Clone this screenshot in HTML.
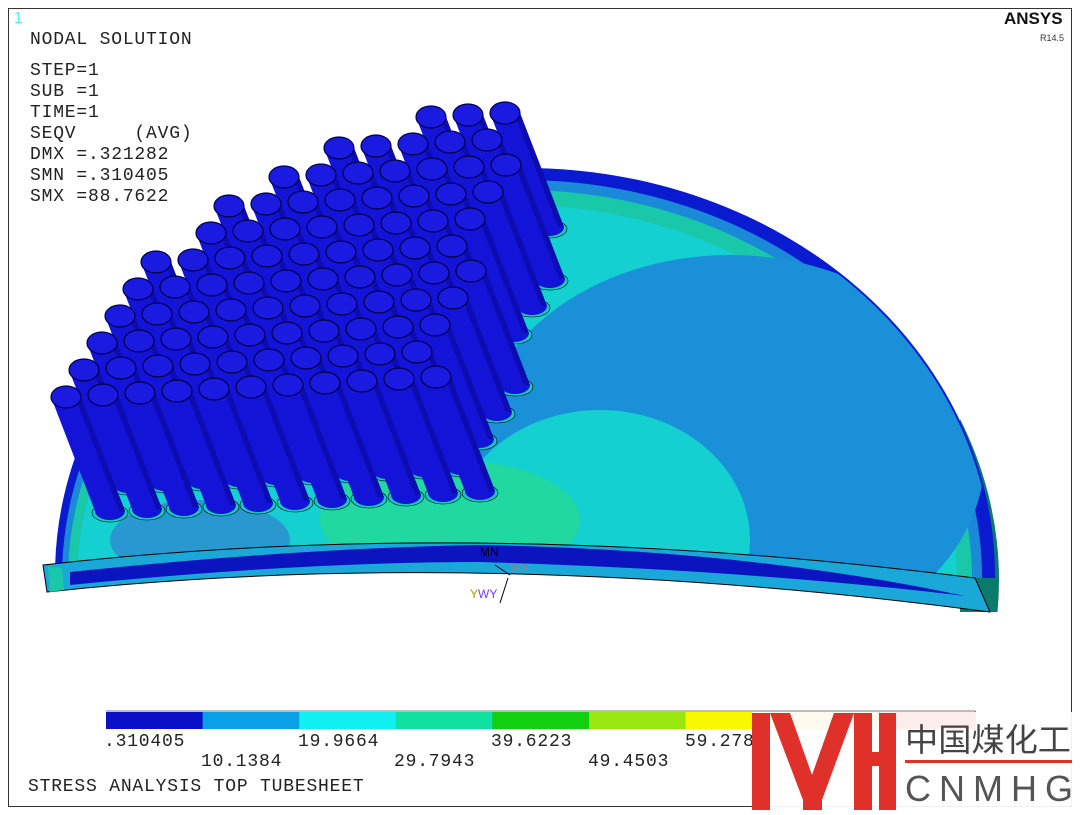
<!DOCTYPE html>
<html><head><meta charset="utf-8"><style>
html,body{margin:0;padding:0;background:#fff;width:1080px;height:815px;overflow:hidden;position:relative}
.t{position:absolute;font-family:"Liberation Mono","Courier New",monospace;font-size:18px;letter-spacing:0.8px;color:#222;white-space:pre;line-height:21px}
svg{position:absolute;left:0;top:0}
</style></head><body>
<svg id="s" width="1080" height="815" viewBox="0 0 1080 815">
<rect x="8.5" y="8.5" width="1063" height="798" fill="#fff" stroke="#333" stroke-width="1"/>
<defs>
<clipPath id="top"><path d="M43 565 Q480 515 975 578 L1080 578 L1080 0 L0 0 L0 565 Z"/></clipPath>
<clipPath id="disk"><ellipse cx="525" cy="575" rx="468" ry="405"/></clipPath>
<clipPath id="low"><rect x="960" y="380" width="60" height="232"/></clipPath>
</defs>
<g clip-path="url(#low)"><ellipse cx="537" cy="580" rx="462" ry="400" fill="#0a7a6a"/></g>
<g clip-path="url(#top)">
 <ellipse cx="525" cy="575" rx="470" ry="407" fill="#0a1ad0"/>
 <ellipse cx="522" cy="578" rx="460" ry="398" fill="#1a8ad8"/>
 <ellipse cx="520" cy="580" rx="452" ry="390" fill="#18c8a8"/>
 <ellipse cx="517" cy="583" rx="440" ry="378" fill="#14d0d0"/>
 <g clip-path="url(#disk)">
  <ellipse cx="730" cy="455" rx="255" ry="200" fill="#1a90d8"/>
  <ellipse cx="600" cy="540" rx="150" ry="130" fill="#14d0d0"/>
  <ellipse cx="450" cy="520" rx="130" ry="60" fill="#20d8a0"/>
  <ellipse cx="200" cy="540" rx="90" ry="40" fill="#2a98d0"/>
 </g>
</g>
<path d="M43 565 Q480 515 975 578 L990 612 Q480 545 47 592 Z" fill="#1aa8d8" stroke="#000" stroke-width="1"/>
<path d="M70 572 Q300 548 480 545 Q750 550 965 596 Q750 570 480 562 Q300 562 70 585 Z" fill="#0c14c0"/>
<path d="M48 567 L62 568 L64 590 L50 592 Z" fill="#18c8a8"/>
<text x="480" y="556" font-family="Liberation Sans" font-size="12" fill="#000">MN</text>
<text x="510" y="572" font-family="Liberation Sans" font-size="12" fill="#888">WX</text>
<text x="470" y="598" font-family="Liberation Sans" font-size="12" fill="#a0a000">Y</text>
<text x="478" y="598" font-family="Liberation Sans" font-size="12" fill="#7040ff">WY</text>
<path d="M500 603 L508 578 M495 565 L510 575" stroke="#000" fill="none"/>
<g id="tubes"></g>
<g id="leg"></g>
<rect x="106" y="710" width="869" height="2" fill="#bbb"/>
</svg>
<div class="t" style="left:14px;top:8px;color:#5ee;font-family:'Liberation Sans',sans-serif;font-size:16px">1</div>
<div class="t" style="left:30px;top:30px">NODAL SOLUTION</div>
<div class="t" style="left:30px;top:61px">STEP=1
SUB =1
TIME=1
SEQV     (AVG)
DMX =.321282
SMN =.310405
SMX =88.7622</div>
<div class="t" style="left:1004px;top:8px;font-family:'Liberation Sans',sans-serif;font-weight:bold;font-size:17px;letter-spacing:0;color:#111">ANSYS</div>
<div class="t" style="left:1040px;top:28px;font-family:'Liberation Sans',sans-serif;font-size:9px;letter-spacing:0;color:#333">R14.5</div>
<div class="t" style="left:104px;top:732px">.310405</div>
<div class="t" style="left:298px;top:732px">19.9664</div>
<div class="t" style="left:491px;top:732px">39.6223</div>
<div class="t" style="left:685px;top:732px">59.2781</div>
<div class="t" style="left:201px;top:752px">10.1384</div>
<div class="t" style="left:394px;top:752px">29.7943</div>
<div class="t" style="left:588px;top:752px">49.4503</div>
<div class="t" style="left:28px;top:777px">STRESS ANALYSIS TOP TUBESHEET</div>
<div style="position:absolute;left:752px;top:712px;width:328px;height:103px;background:rgba(255,255,255,0.93)"></div>
<svg width="1080" height="815" viewBox="0 0 1080 815">
<g fill="#e0302a">
<rect x="752" y="713" width="18" height="97"/>
<path d="M770 713 L790 713 L812 775 L834 713 L854 713 L822 800 L822 810 L803 810 L803 800 Z"/>
<rect x="854" y="713" width="18" height="97"/>
<rect x="872" y="752" width="10" height="14"/>
<rect x="879" y="713" width="17" height="97"/>
<rect x="905" y="760" width="167" height="3"/>
</g>
<text x="905" y="751" font-family="'Noto Sans CJK SC',sans-serif" font-size="32" fill="#444" textLength="166" lengthAdjust="spacingAndGlyphs">中国煤化工</text>
<text x="905" y="801" font-family="'Liberation Sans',sans-serif" font-size="36" fill="#555" textLength="168" lengthAdjust="spacing">CNMHG</text>
</svg>
<script>
var ns="http://www.w3.org/2000/svg";
function el(t,a,p){var e=document.createElementNS(ns,t);for(var k in a)e.setAttribute(k,a[k]);p.appendChild(e);return e;}
var leg=document.getElementById("leg");
var cols=["#0a10c8","#0aa0e8","#10f0f0","#10e0a0","#10d010","#98e810","#f8f800","#f0b000","#f00000"];
for(var i=0;i<9;i++)el("rect",{x:106+i*96.6,y:711,width:97,height:18,fill:cols[i]},leg);
var g=document.getElementById("tubes");
var poly=[[50,410],[178,230],[250,180],[480,96],[525,110],[432,400]];
function inside(x,y){var c=false;for(var i=0,j=poly.length-1;i<poly.length;j=i++){var xi=poly[i][0],yi=poly[i][1],xj=poly[j][0],yj=poly[j][1];if(((yi>y)!=(yj>y))&&(x<(xj-xi)*(y-yi)/(yj-yi)+xi))c=!c;}return c;}
var pts=[];
for(var i=-15;i<25;i++)for(var j=-5;j<20;j++){var x=66+i*37+j*18,y=397-i*2-j*27;if(inside(x,y))pts.push([x,y]);}
pts.sort(function(a,b){return a[1]-b[1]||a[0]-b[0];});
var Lx=44,Ly=114,r=15;
pts.forEach(function(p){var x=p[0],y=p[1];
 el("ellipse",{cx:x+Lx,cy:y+Ly+2,rx:r+3,ry:9,fill:"#18c8c0",stroke:"#000","stroke-width":0.6},g);
 el("path",{d:"M"+(x-r)+" "+y+" L"+(x-r+Lx)+" "+(y+Ly)+" A"+r+" 9 0 0 0 "+(x+r+Lx)+" "+(y+Ly)+" L"+(x+r)+" "+y+" Z",fill:"#1414d8"},g);
 el("path",{d:"M"+(x+r-6)+" "+y+" L"+(x+r-6+Lx)+" "+(y+Ly)+" L"+(x+r+Lx)+" "+(y+Ly)+" L"+(x+r)+" "+y+" Z",fill:"#0c0cb0"},g);
 el("ellipse",{cx:x,cy:y,rx:r,ry:11,fill:"#1a1ae0",stroke:"#000048","stroke-width":1.2},g);
});
</script>
</body></html>
